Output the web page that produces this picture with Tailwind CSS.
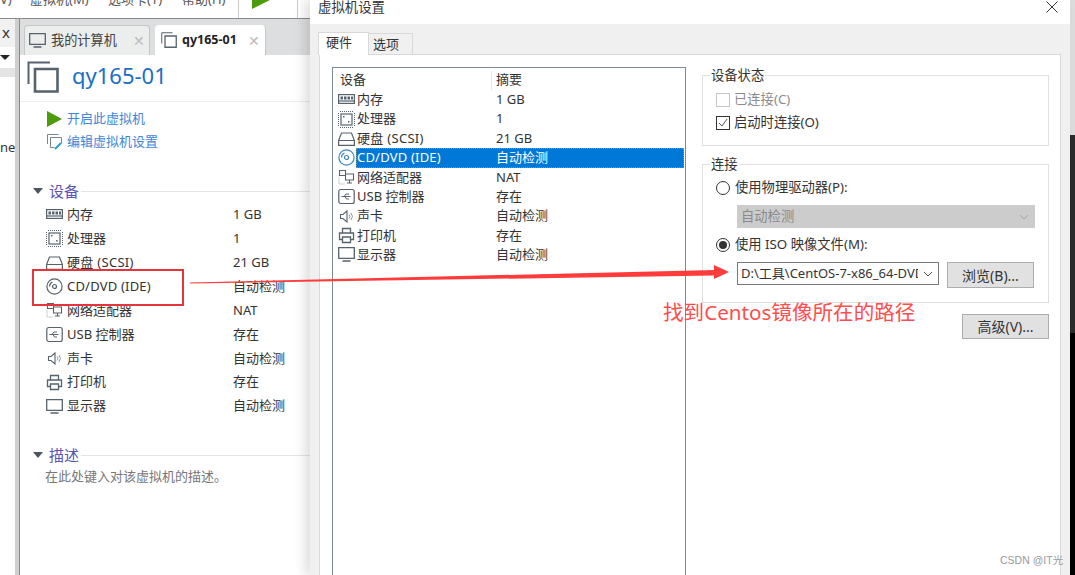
<!DOCTYPE html>
<html lang="zh-CN">
<head>
  <meta charset="UTF-8" />
  <title>虚拟机设置</title>
  <script src="https://cdn.jsdelivr.net/npm/@tailwindcss/browser@4"></script>
</head>
<body class="bg-black">

  <!-- shared icons -->
  <svg class="hidden">
    <symbol id="i-mem" viewBox="0 0 17 17"><g fill="none" stroke="#56626c" stroke-width="1.2"><rect x=".6" y="3.6" width="15.8" height="8.8"/><path d="M.6 10h15.8"/></g><path fill="#56626c" d="M2.5 5.5h2.5v3H2.5zM6 5.5h2.5v3H6zM9.500 5.5H12v3H9.500zM13 5.500h2v3h-2z"/></symbol>
    <symbol id="i-cpu" viewBox="0 0 17 17"><rect x="3" y="3" width="11" height="11" fill="none" stroke="#56626c" stroke-width="1.2"/><path fill="none" stroke="#56626c" stroke-dasharray="1 1" d="M.5 2v13M16.500 2v13M2 .5h13M2 16.500h13"/><path fill="#56626c" d="M5 5h1.500v1.500H5zM10 10h1.500v1.500H10z"/></symbol>
    <symbol id="i-hdd" viewBox="0 0 17 17"><path fill="none" stroke="#56626c" stroke-width="1.2" d="M.6 10.500 3.500 3h10l2.900 7.500v4.900H.6zM.6 10.500h15.800"/></symbol>
    <symbol id="i-cd" viewBox="0 0 17 17"><g fill="none" stroke="#56626c" stroke-width="1.200"><circle cx="8.500" cy="8.500" r="7.600"/><circle cx="8.500" cy="8.500" r="2"/><path d="M3.500 8.500a5 5 0 0 1 3-4.500"/></g></symbol>
    <symbol id="i-cd-blue" viewBox="0 0 17 17"><g fill="none" stroke="#3d86c6" stroke-width="1.200"><circle cx="8.500" cy="8.500" r="7.600"/><circle cx="8.500" cy="8.500" r="2"/><path d="M3.500 8.500a5 5 0 0 1 3-4.500"/></g></symbol>
    <symbol id="i-net" viewBox="0 0 17 17"><g fill="none" stroke="#56626c" stroke-width="1.100"><path d="M1.500 1.500h6v5h-6zM7.500 5h8v6h-8zM11.500 11v2.500M9 14h5"/></g><path fill="none" stroke="#9aa3aa" stroke-dasharray="1 1" d="M1 8.500v6.500h6"/></symbol>
    <symbol id="i-usb" viewBox="0 0 17 17"><rect x=".8" y="1.500" width="15.400" height="14" rx="2" fill="none" stroke="#56626c" stroke-width="1.200"/><path fill="none" stroke="#56626c" d="M3.500 8.500h9M6 8.500 8 6h3M7 8.500l1.500 2.500H11"/></symbol>
    <symbol id="i-snd" viewBox="0 0 17 17"><path fill="none" stroke="#56626c" stroke-width="1.100" d="M2.500 6.500h2.500L9 3v11l-4-3.500H2.500z"/><path fill="none" stroke="#8b959d" d="M11 6.500a3 3 0 0 1 0 4M13 5a5.500 5.500 0 0 1 0 7"/></symbol>
    <symbol id="i-prn" viewBox="0 0 17 17"><path fill="none" stroke="#56626c" stroke-width="1.300" d="M4.500 6V1.500h8V6M4 12.500H1.500V6h14v6.500H13M4.500 10h8v5.500h-8z"/></symbol>
    <symbol id="i-mon" viewBox="0 0 17 17"><path fill="none" stroke="#56626c" stroke-width="1.300" d="M.7 1.700h15.600v10.600H.7zM4.500 15h8"/></symbol>
    <symbol id="i-vm" viewBox="0 0 32 32"><path fill="none" stroke="#56626c" stroke-width="2" d="M1.500 23V1.500H23"/><path fill="none" stroke="#56626c" stroke-width="2.600" d="M8 8h22.500v22.500H8z"/></symbol>
  </svg>

  <div class="relative w-[1075px] h-[575px] overflow-hidden font-['Noto_Sans','Noto_Sans_CJK_SC',sans-serif] text-[13px] text-[#333]">

    <!-- desktop strip on the right -->
    <div class="absolute right-0 top-0 w-[5px] h-full flex flex-col">
      <div class="h-[135px] bg-[#dcdcdc]"></div>
      <div class="h-[198px] bg-[#2b2b2b]"></div>
      <div class="flex-1 bg-black"></div>
    </div>

    <!-- workstation window -->
    <div class="absolute left-0 top-0 w-[310px] h-full bg-white flex flex-col">
      <!-- menu bar, text cut off at the top -->
      <div class="h-[19px] shrink-0 relative overflow-hidden flex border-b border-[#8a8a8a] text-[#555]">
        <div class="absolute -top-[21px] left-0 flex items-center leading-[18px] text-[13px]">
          <span class="w-[30px]">V)</span>
          <span class="w-[78px]">虚拟机(M)</span>
          <span class="w-[74px]">选项卡(T)</span>
          <span class="w-[56px]">帮助(H)</span>
          <span class="w-px h-[40px] bg-[#ccc]"></span>
          <svg class="ml-[13px]" width="20" height="20" viewBox="0 0 20 20"><path fill="#4d9a0c" d="M0 0 20 10 0 20z"/></svg>
          <span class="ml-[25px] w-px h-[40px] bg-[#ccc]"></span>
        </div>
      </div>

      <div class="flex-1 flex min-h-0">
        <!-- library panel remnant -->
        <div class="w-[15px] shrink-0 flex flex-col">
          <div class="h-[28px] bg-[#f1f1f1] text-[15px] leading-[26px] pl-[2px] text-[#333]">x</div>
          <div class="h-[21px] bg-white flex items-center"><span class="w-0 h-0 border-x-[5px] border-x-transparent border-t-[5px] border-t-[#222]"></span></div>
          <div class="h-[9px] bg-[#e4e4e4]"></div>
          <div class="pt-[60px] text-[13px] leading-[20px] whitespace-nowrap overflow-hidden">ne</div>
        </div>
        <div class="w-[4px] shrink-0 bg-[#cfcfcf]"></div>

        <!-- main panel -->
        <div class="flex-1 min-w-0 border-l border-[#8a8a8a] flex flex-col">
          <!-- tabs -->
          <div class="h-[36px] shrink-0 bg-[#dcdedf] flex items-end pl-[4px] gap-[5px]">
            <div class="w-[126px] h-[30px] bg-[#eceded] border border-b-0 border-[#c4c6c8] rounded-t-[4px] flex items-center pl-[4px] text-[#444]">
              <svg class="w-[17px] h-[17px]"><use href="#i-mon"/></svg>
              <span class="ml-[5px] w-[82px] text-[13.200px]">我的计算机</span>
              <span class="text-[#bbb] text-[14px]">✕</span>
            </div>
            <div class="w-[111px] h-[30px] bg-white border-r border-[#c4c6c8] rounded-t-[4px] flex items-center pl-[6px]">
              <svg class="w-[16px] h-[16px]"><use href="#i-vm"/></svg>
              <span class="ml-[5px] w-[66px] font-bold text-[12.500px] text-[#222]">qy165-01</span>
              <span class="text-[#bbb] text-[14px]">✕</span>
            </div>
          </div>

          <!-- title -->
          <div class="h-[47px] shrink-0 border-b border-[#ececec] flex items-center pl-[7px]">
            <svg class="w-[32px] h-[32px] -mt-[3px]"><use href="#i-vm"/></svg>
            <span class="ml-[13px] text-[22px] leading-none text-[#1a6fc4] -mt-[6px]">qy165-01</span>
          </div>

          <!-- actions -->
          <div class="pt-[5px] pl-[27px] text-[#3f86d8]">
            <div class="h-[23px] flex items-center">
              <svg class="w-[15px] h-[16px]" viewBox="0 0 15 16"><path fill="#4d9a0c" d="M0 0 15 8 0 16z"/></svg>
              <span class="ml-[5px]">开启此虚拟机</span>
            </div>
            <div class="h-[23px] flex items-center">
              <svg class="w-[16px] h-[17px]" viewBox="0 0 16 17"><path fill="none" stroke="#7b858d" d="M.5 11V1.500h11M3.500 4.500h11v6M3.500 4.500v10h4"/><path fill="none" stroke="#26a0da" stroke-width="2" d="M8 16l6-6"/></svg>
              <span class="ml-[4px]">编辑虚拟机设置</span>
            </div>
          </div>

          <!-- devices -->
          <div class="mt-[26px] h-[24px] shrink-0 flex items-center pl-[13px]">
            <span class="w-0 h-0 border-x-[5px] border-x-transparent border-t-[6px] border-t-[#4d5560]"></span>
            <span class="ml-[6px] text-[15px] text-[#5a55b5]">设备</span>
            <span class="ml-[2px] flex-1 h-px bg-[#e4e4e6]"></span>
          </div>
          <div class="pl-[26px]">
            <div class="flex items-center h-[23.900px]"><svg class="w-[17px] h-[17px]"><use href="#i-mem"/></svg><span class="ml-[4px] w-[166px]">内存</span><span>1 GB</span></div>
            <div class="flex items-center h-[23.900px]"><svg class="w-[17px] h-[17px]"><use href="#i-cpu"/></svg><span class="ml-[4px] w-[166px]">处理器</span><span>1</span></div>
            <div class="flex items-center h-[23.900px]"><svg class="w-[17px] h-[17px]"><use href="#i-hdd"/></svg><span class="ml-[4px] w-[166px] tracking-[0.3px]">硬盘 (SCSI)</span><span>21 GB</span></div>
            <div class="flex items-center h-[23.900px]"><svg class="w-[17px] h-[17px]"><use href="#i-cd"/></svg><span class="ml-[4px] w-[166px] tracking-[0.2px]">CD/DVD (IDE)</span><span>自动检测</span></div>
            <div class="flex items-center h-[23.900px]"><svg class="w-[17px] h-[17px]"><use href="#i-net"/></svg><span class="ml-[4px] w-[166px]">网络适配器</span><span>NAT</span></div>
            <div class="flex items-center h-[23.900px]"><svg class="w-[17px] h-[17px]"><use href="#i-usb"/></svg><span class="ml-[4px] w-[166px]">USB 控制器</span><span>存在</span></div>
            <div class="flex items-center h-[23.900px]"><svg class="w-[17px] h-[17px]"><use href="#i-snd"/></svg><span class="ml-[4px] w-[166px]">声卡</span><span>自动检测</span></div>
            <div class="flex items-center h-[23.900px]"><svg class="w-[17px] h-[17px]"><use href="#i-prn"/></svg><span class="ml-[4px] w-[166px]">打印机</span><span>存在</span></div>
            <div class="flex items-center h-[23.900px]"><svg class="w-[17px] h-[17px]"><use href="#i-mon"/></svg><span class="ml-[4px] w-[166px]">显示器</span><span>自动检测</span></div>
          </div>

          <!-- description -->
          <div class="mt-[25px] h-[24px] shrink-0 flex items-center pl-[13px]">
            <span class="w-0 h-0 border-x-[5px] border-x-transparent border-t-[6px] border-t-[#4d5560]"></span>
            <span class="ml-[6px] text-[15px] text-[#5a55b5]">描述</span>
            <span class="ml-[2px] flex-1 h-px bg-[#e4e4e6]"></span>
          </div>
          <div class="pl-[25px] h-[20px] leading-[18px] text-[#777]">在此处键入对该虚拟机的描述。</div>
        </div>
      </div>
    </div>

    <!-- settings dialog -->
    <div class="absolute left-[310px] top-0 w-[760px] h-full bg-[#f0f0f0] flex flex-col shadow-[-6px_0_10px_rgba(0,0,0,0.12)]">
      <div class="h-[24px] shrink-0 bg-white flex justify-between pl-[8px] pr-[12px] leading-[15px] text-[#333]">
        <span class="text-[13.400px]">虚拟机设置</span>
        <svg class="mt-[1px]" width="12" height="12" viewBox="0 0 12 12"><path fill="none" stroke="#333" d="M.5.500l11 11M11.500.500l-11 11"/></svg>
      </div>

      <div class="h-[31px] shrink-0 flex items-end pl-[8px] relative z-10 -mb-px">
        <div class="w-[51px] h-[23px] bg-white border border-b-0 border-[#d9d9d9] flex items-center pl-[7px] pb-[2px]">硬件</div>
        <div class="w-[44px] h-[21px] bg-[#f0f0f0] border border-l-0 border-b-0 border-[#d9d9d9] flex items-center pl-[4px] pt-[1px] mb-px">选项</div>
      </div>

      <div class="ml-[9px] w-[742px] flex-1 min-h-0 bg-white border border-[#d9d9d9] flex pl-[12px] pt-[12px] -mb-[10px]">
        <!-- device list -->
        <div class="w-[354px] shrink-0 border border-[#7f8a99] pl-[5px] pr-[1px] -mb-[10px]">
          <div class="h-[20px] flex items-center mt-[2px]">
            <span class="w-[153px] pl-[2px]">设备</span>
            <span class="w-px h-[19px] bg-[#e5e5e5]"></span>
            <span class="pl-[4px]">摘要</span>
          </div>
          <div>
            <div class="flex items-center h-[19.400px]"><svg class="w-[17px] h-[17px]"><use href="#i-mem"/></svg><span class="ml-[2px] w-[139px]">内存</span><span>1 GB</span></div>
            <div class="flex items-center h-[19.400px]"><svg class="w-[17px] h-[17px]"><use href="#i-cpu"/></svg><span class="ml-[2px] w-[139px]">处理器</span><span>1</span></div>
            <div class="flex items-center h-[19.400px]"><svg class="w-[17px] h-[17px]"><use href="#i-hdd"/></svg><span class="ml-[2px] w-[139px] tracking-[0.3px]">硬盘 (SCSI)</span><span>21 GB</span></div>
            <div class="flex items-center h-[19.400px]"><svg class="w-[17px] h-[17px]"><use href="#i-cd-blue"/></svg><div class="ml-[1px] flex-1 h-full flex items-center bg-[#0078d7] text-white outline-1 -outline-offset-1 outline-dotted outline-[#e8a04d]/60"><span class="w-[140px] pl-px tracking-[0.2px]">CD/DVD (IDE)</span><span>自动检测</span></div></div>
            <div class="flex items-center h-[19.400px]"><svg class="w-[17px] h-[17px]"><use href="#i-net"/></svg><span class="ml-[2px] w-[139px]">网络适配器</span><span>NAT</span></div>
            <div class="flex items-center h-[19.400px]"><svg class="w-[17px] h-[17px]"><use href="#i-usb"/></svg><span class="ml-[2px] w-[139px]">USB 控制器</span><span>存在</span></div>
            <div class="flex items-center h-[19.400px]"><svg class="w-[17px] h-[17px]"><use href="#i-snd"/></svg><span class="ml-[2px] w-[139px]">声卡</span><span>自动检测</span></div>
            <div class="flex items-center h-[19.400px]"><svg class="w-[17px] h-[17px]"><use href="#i-prn"/></svg><span class="ml-[2px] w-[139px]">打印机</span><span>存在</span></div>
            <div class="flex items-center h-[19.400px]"><svg class="w-[17px] h-[17px]"><use href="#i-mon"/></svg><span class="ml-[2px] w-[139px]">显示器</span><span>自动检测</span></div>
          </div>
        </div>

        <!-- right column -->
        <div class="ml-[16px] w-[347px] shrink-0 flex flex-col pt-[8px] text-[13.300px]">
          <div class="relative h-[71px] border border-[#dfdfdf] pl-[13px] pt-[12px]">
            <span class="absolute -top-[9px] left-[7px] px-px bg-white leading-[17px]">设备状态</span>
            <div class="h-[23.500px] flex items-center text-[#8c8c8c]">
              <span class="w-[14px] h-[14px] border border-[#c6c6c6]"></span>
              <span class="ml-[4px]">已连接(C)</span>
            </div>
            <div class="h-[23px] flex items-center">
              <span class="w-[14px] h-[14px] border border-[#333] flex items-center justify-center">
                <svg width="12" height="12" viewBox="0 0 12 12"><path fill="none" stroke="#555" d="M2 6l3 3 5-7"/></svg>
              </span>
              <span class="ml-[4px]">启动时连接(O)</span>
            </div>
          </div>

          <div class="relative mt-[18px] h-[139px] border border-[#dfdfdf] pl-[13px] pt-[11px]">
            <span class="absolute -top-[9px] left-[7px] px-px bg-white leading-[17px]">连接</span>
            <div class="h-[23px] flex items-center">
              <span class="w-[14px] h-[14px] rounded-full border border-[#333]"></span>
              <span class="ml-[5px]">使用物理驱动器(P):</span>
            </div>
            <div class="ml-[21px] mt-[6px] w-[298px] h-[23px] bg-[#cccccc] flex items-center justify-between pl-[4px] pr-[6px] text-[#8a8a8a]">
              <span>自动检测</span>
              <svg width="10" height="6" viewBox="0 0 10 6"><path fill="none" stroke="#a5a5a5" d="M1 1l4 4 4-4"/></svg>
            </div>
            <div class="mt-[5px] h-[23px] flex items-center">
              <span class="w-[14px] h-[14px] rounded-full border border-[#333] flex items-center justify-center"><span class="w-[8px] h-[8px] rounded-full bg-[#333]"></span></span>
              <span class="ml-[5px]">使用 ISO 映像文件(M):</span>
            </div>
            <div class="ml-[21px] mt-[6px] flex items-start gap-[8px]">
              <div class="w-[202px] h-[23px] bg-white border border-[#7a7a7a] flex items-center justify-between pl-[3px] pr-[5px]">
                <span class="w-[177px] overflow-hidden whitespace-nowrap text-[13px]">D:\工具\CentOS-7-x86_64-DVD</span>
                <svg class="shrink-0" width="10" height="6" viewBox="0 0 10 6"><path fill="none" stroke="#555" d="M1 1l4 4 4-4"/></svg>
              </div>
              <button class="w-[87px] h-[26px] bg-[#e1e1e1] border border-[#adadad] text-[#333] text-[14px]">浏览(B)...</button>
            </div>
          </div>

          <button class="mt-[11px] self-end w-[87px] h-[25px] bg-[#e1e1e1] border border-[#adadad] text-[#333] text-[14px]">高级(V)...</button>
        </div>
      </div>
      <div class="h-[9px] shrink-0"></div>
    </div>

    <!-- annotations drawn over the screenshot -->
    <div class="absolute left-[32px] top-[269px] w-[152px] h-[37px] border-[2.500px] border-[#e5343a]"></div>
    <svg class="absolute left-0 top-0" width="1075" height="575" viewBox="0 0 1075 575">
      <path fill="#ff3b3b" d="M190 282.500 714 270V265L729 272 714 279V275.500L190 283.500z"/>
    </svg>
    <div class="absolute left-[663px] top-[298px] text-[20.600px] leading-[28px] text-[#ff4d4d]">找到Centos镜像所在的路径</div>
    <div class="absolute left-[1000px] top-[554px] font-['Liberation_Sans','Noto_Sans_CJK_SC',sans-serif] text-[10.500px] leading-[13px] text-[#999]">CSDN @IT光</div>
  </div>
</body>
</html>
